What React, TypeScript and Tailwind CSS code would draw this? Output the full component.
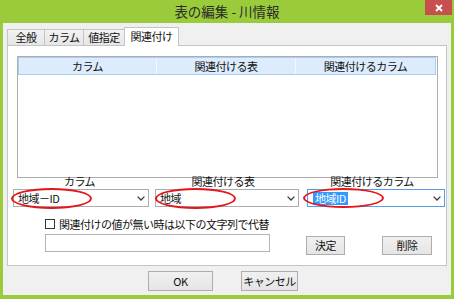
import React, { ReactNode } from "react";

const Chevron = () => (
  <svg width="8" height="5" viewBox="0 0 8 5" className="shrink-0">
    <path d="M0.6 0.6 L4 4 L7.4 0.6" fill="none" stroke="#3a3a3a" strokeWidth="1.3" />
  </svg>
);

interface ComboProps {
  children: ReactNode;
  className?: string;
  focused?: boolean;
}

const Combo = ({ children, className, focused }: ComboProps) => (
  <div
    className={`${className || ""} flex h-[18px] items-center border bg-white pl-[4px] pr-[3px] ${focused ? "border-[#569de5]" : "border-[#acacac]"}`}
  >
    <div className="flex flex-1 items-center text-[11px] leading-[13px] tracking-[-0.5px]">{children}</div>
    <Chevron />
  </div>
);

const Button = ({ children, className }: { children: ReactNode; className?: string }) => (
  <div
    className={`${className || ""} flex items-center justify-center border border-[#adadad] bg-gradient-to-b from-[#f0f0f0] to-[#e5e5e5] text-[11px] leading-none tracking-[-0.5px]`}
  >
    {children}
  </div>
);

const Tab = ({ children, className }: { children: ReactNode; className?: string }) => (
  <div
    className={`${className || ""} flex h-[16px] items-center justify-center border border-b-0 border-[#c4c4c4] bg-gradient-to-b from-[#f2f2f2] to-[#e6e6e6] text-[11px] leading-none tracking-[-0.5px]`}
  >
    {children}
  </div>
);

const App = () => {
  return (
    <div className="flex h-[299px] w-[454px] flex-col overflow-hidden bg-[#9acb3b] font-['Noto_Sans_CJK_JP','Noto_Sans',sans-serif] text-[#111]">
      {/* title bar */}
      <div className="flex h-[23px] shrink-0">
        <div className="w-[29px]" />
        <div className="flex flex-1 items-center justify-center pb-[1px] text-[13.5px] text-[#2a2a2a]">表の編集 - 川情報</div>
        <div className="mr-[2px] flex h-[15px] w-[27px] items-center justify-center bg-[#c7504f]">
          <svg width="8" height="8" viewBox="0 0 8 8">
            <path d="M1 1 L7 7 M7 1 L1 7" stroke="#fff" strokeWidth="1.8" />
          </svg>
        </div>
      </div>

      {/* body */}
      <div className="mx-[3px] mb-[4px] flex flex-1 flex-col bg-[#f0f0f0]">
        {/* tabs */}
        <div className="mt-[4px] flex h-[18px] items-end pl-[4px]">
          <Tab className="w-[38px]">全般</Tab>
          <Tab className="-ml-px w-[40px]">カラム</Tab>
          <Tab className="-ml-px w-[42px]">値指定</Tab>
          <div className="relative z-10 -mb-px -ml-px flex h-[19px] w-[55px] items-center justify-center border border-b-0 border-[#c4c4c4] bg-white pb-[1px] text-[11px] leading-none tracking-[-0.5px]">
            関連付け
          </div>
        </div>

        {/* panel */}
        <div className="relative ml-[4px] h-[221px] w-[440px] border border-[#c4c4c4] bg-white">
          {/* list view */}
          <div className="ml-[9px] mt-[10px] h-[122px] w-[421px] border border-[#adadad]">
            <div className="flex h-[18px] w-[418px] border border-[#a6cdf2] bg-[#dcecfc] text-[11px] leading-none tracking-[-0.5px]">
              <div className="flex w-[138px] items-center justify-center border-r border-[#f2f8fe]">カラム</div>
              <div className="flex w-[139px] items-center justify-center border-r border-[#f2f8fe]">関連付ける表</div>
              <div className="flex flex-1 items-center justify-center">関連付けるカラム</div>
            </div>
          </div>

          {/* combos */}
          <div className="-mt-[2px] flex">
            <div className="ml-[5px] flex w-[136px] flex-col">
              <div className="pr-[3px] text-center text-[11px] leading-[11px] tracking-[-0.5px]">カラム</div>
              <Combo className="mt-[2px]">地域－ID</Combo>
            </div>
            <div className="ml-[6px] flex w-[144px] flex-col">
              <div className="pr-[8px] text-center text-[11px] leading-[11px] tracking-[-0.5px]">関連付ける表</div>
              <Combo className="mt-[2px]">地域</Combo>
            </div>
            <div className="ml-[8px] flex w-[138px] flex-col">
              <div className="pr-[8px] text-center text-[11px] leading-[11px] tracking-[-0.5px]">関連付けるカラム</div>
              <Combo className="mt-[2px]" focused>
                <span className="ml-[1px] bg-[#3399ff] px-[2px] text-white">地域ID</span>
              </Combo>
            </div>
          </div>

          {/* checkbox */}
          <div className="ml-[37px] mt-[12px] flex h-[10px] items-center">
            <div className="h-[10px] w-[10px] border border-[#333] bg-white" />
            <span className="ml-[4px] text-[11px] leading-none tracking-[-0.5px]">関連付けの値が無い時は以下の文字列で代替</span>
          </div>

          {/* input + buttons */}
          <div className="ml-[37px] mt-[5px] flex items-start">
            <div className="h-[18px] w-[225px] border border-[#b4b4b4] bg-white" />
            <Button className="ml-[36px] mt-[2px] h-[19px] w-[39px]">決定</Button>
            <Button className="ml-[37px] mt-[2px] h-[19px] w-[50px]">削除</Button>
          </div>

          {/* red marks */}
          <div className="absolute left-[3px] top-[142px] h-[21px] w-[81px] rounded-[50%] border-2 border-[#e3161b]" />
          <div className="absolute left-[147px] top-[142px] h-[21px] w-[81px] rounded-[50%] border-2 border-[#e3161b]" />
          <div className="absolute left-[295px] top-[142px] h-[20px] w-[81px] rounded-[50%] border-2 border-[#e3161b]" />
        </div>

        {/* dialog buttons */}
        <div className="ml-[145px] mt-[5px] flex gap-[28px]">
          <Button className="h-[20px] w-[65px]">OK</Button>
          <Button className="h-[20px] w-[57px]">キャンセル</Button>
        </div>
      </div>
    </div>
  );
};

export default App;
